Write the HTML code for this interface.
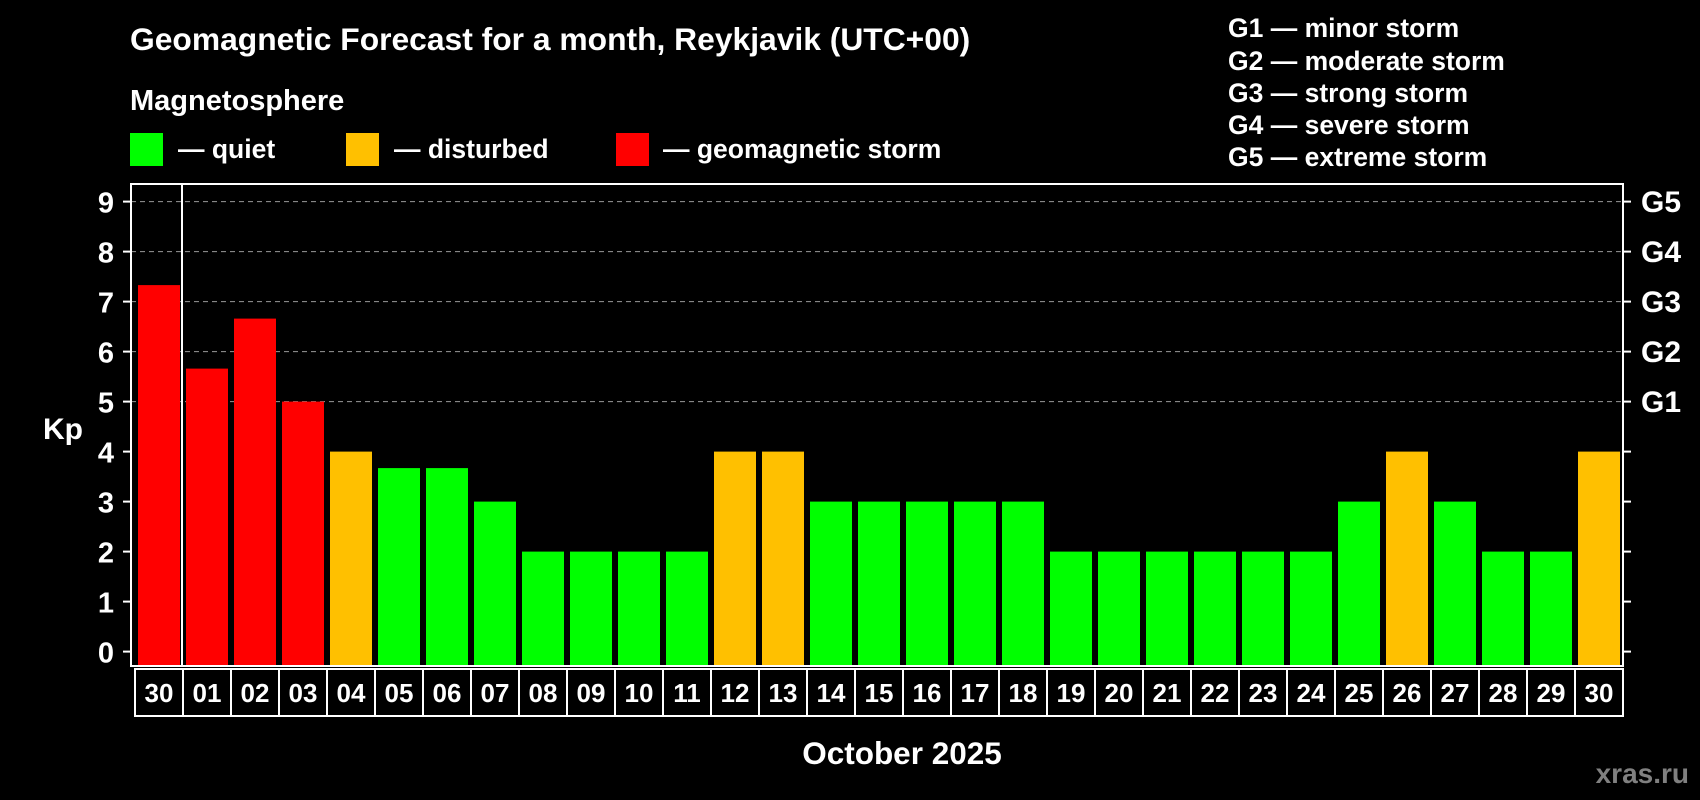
<!DOCTYPE html>
<html><head><meta charset="utf-8"><style>
body{margin:0;width:1700px;height:800px;background:#000;overflow:hidden;position:relative;font-family:"Liberation Sans",Arial,sans-serif;font-weight:bold;color:#fff}
</style></head><body>
<svg width="1700" height="800" style="position:absolute;left:0;top:0" font-family="Liberation Sans, Arial, sans-serif" font-weight="bold">
<text x="130" y="50" fill="#fff" font-size="31.8">Geomagnetic Forecast for a month, Reykjavik (UTC+00)</text>
<text x="130" y="110" fill="#fff" font-size="29">Magnetosphere</text>
<rect x="130" y="133" width="33" height="33" fill="#00ff00"/>
<text x="178" y="158" fill="#fff" font-size="26.5">— quiet</text>
<rect x="346" y="133" width="33" height="33" fill="#ffc000"/>
<text x="394" y="158" fill="#fff" font-size="26.5">— disturbed</text>
<rect x="616" y="133" width="33" height="33" fill="#ff0000"/>
<text x="663" y="158" fill="#fff" font-size="26.5">— geomagnetic storm</text>
<g fill="#fff" font-size="26.5">
<text x="1228" y="37">G1 — minor storm</text>
<text x="1228" y="70">G2 — moderate storm</text>
<text x="1228" y="102">G3 — strong storm</text>
<text x="1228" y="134">G4 — severe storm</text>
<text x="1228" y="166">G5 — extreme storm</text>
</g>
<g stroke="#999" stroke-width="1" stroke-dasharray="5,4">
<line x1="131" x2="1622" y1="201.6" y2="201.6"/><line x1="131" x2="1622" y1="251.6" y2="251.6"/><line x1="131" x2="1622" y1="301.6" y2="301.6"/><line x1="131" x2="1622" y1="351.6" y2="351.6"/><line x1="131" x2="1622" y1="401.6" y2="401.6"/>
</g>
<g id="b"></g>
<rect x="131" y="184" width="1492" height="482" fill="none" stroke="#fff" stroke-width="2"/>
<line x1="182" y1="184" x2="182" y2="666" stroke="#fff" stroke-width="2"/>
<g id="t" stroke="#fff" stroke-width="2"></g>
<g id="lab"></g>
<text x="63" y="439" fill="#fff" font-size="30" text-anchor="middle">Kp</text>
<g fill="#fff" font-size="30">
<text x="1641" y="212">G5</text><text x="1641" y="262">G4</text><text x="1641" y="312">G3</text><text x="1641" y="362">G2</text><text x="1641" y="412">G1</text>
</g>
<text x="902" y="764" fill="#fff" font-size="31.5" text-anchor="middle">October 2025</text>
<text x="1689" y="783" fill="#808080" font-size="28" text-anchor="end">xras.ru</text>
</svg>
<script>
var v=[7.33,5.66,6.66,5,4,3.67,3.67,3,2,2,2,2,4,4,3,3,3,3,3,2,2,2,2,2,2,3,4,3,2,2,4];
var d=["30","01","02","03","04","05","06","07","08","09","10","11","12","13","14","15","16","17","18","19","20","21","22","23","24","25","26","27","28","29","30"];
var ns="http://www.w3.org/2000/svg",b=document.getElementById("b"),t=document.getElementById("t"),l=document.getElementById("lab");
function el(p,n,a,tx){var e=document.createElementNS(ns,n);for(var k in a)e.setAttribute(k,a[k]);if(tx)e.textContent=tx;p.appendChild(e);return e;}
v.forEach(function(k,i){var c=k>=5?"#ff0000":k>=4?"#ffc000":"#00ff00";var y=651.6-50*k;
el(b,"rect",{x:138+48*i,y:y,width:42,height:666-y,fill:c});
el(l,"rect",{x:135+48*i,y:669,width:48,height:47,fill:"none",stroke:"#fff","stroke-width":2});
el(l,"text",{x:159+48*i,y:702,fill:"#fff","font-size":26,"text-anchor":"middle"},d[i]);});
for(var k=0;k<=9;k++){var y=651.6-50*k;el(t,"line",{x1:123,x2:131,y1:y,y2:y});el(t,"line",{x1:1623,x2:1631,y1:y,y2:y});
el(l,"text",{x:106,y:y+11,fill:"#fff","font-size":29,"text-anchor":"middle"},""+k);}
</script>
</body></html>
